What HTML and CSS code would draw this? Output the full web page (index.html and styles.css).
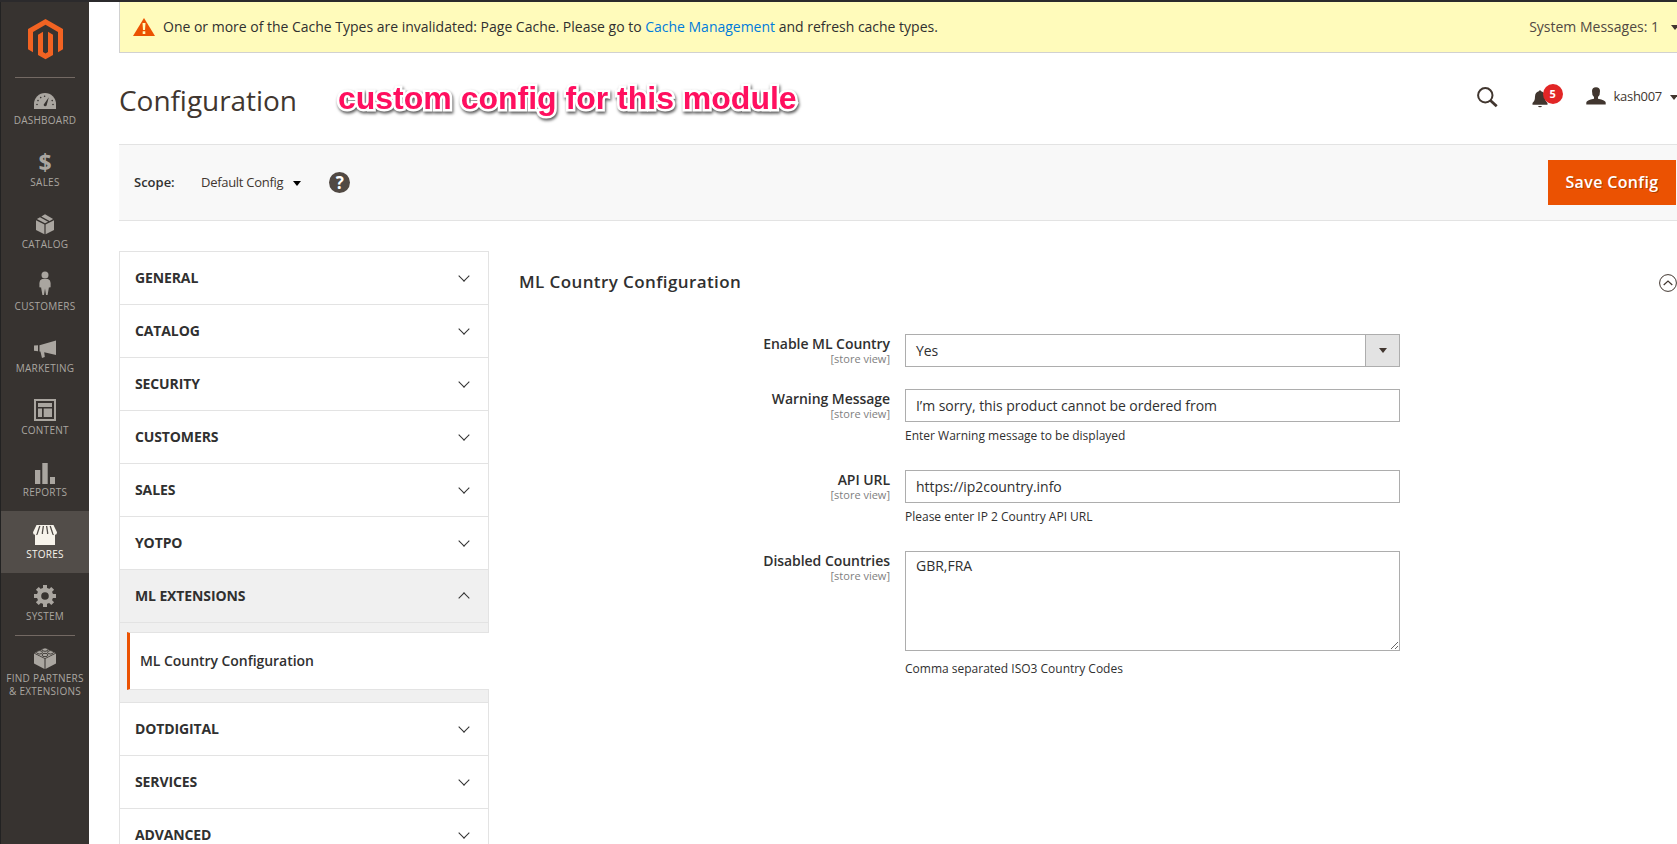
FILE: index.html
```html
<!DOCTYPE html>
<html lang="en">
<head>
<meta charset="utf-8">
<title>Configuration</title>
<link rel="stylesheet" href="styles.css">
</head>
<body>
<div class="page">
  <nav class="menu">
    <div class="logo"><svg width="35" height="41" viewBox="0 0 35 41"><path fill="#f26322" d="M17.5 0 35 10.1V30.3L30 33.2V13L17.5 5.8 5 13V33.2L0 30.3V10.1zM20 12.8 25 15.7V35.9L17.5 40.3 10 35.9V15.7L15 12.8V33L17.5 34.5 20 33z"/></svg></div>
    <a class="item"><span class="icon"><svg width="22" height="16" viewBox="0 0 22 16"><path fill="currentColor" d="M0 16V11A11 11 0 0 1 22 11V16z"/><path fill="#373330" d="M9.6 11.8 14.8 4.2 12.6 12.6A1.7 1.7 0 0 1 9.6 11.8z"/><g fill="#373330"><circle cx="3" cy="11.5" r=".8"/><circle cx="4" cy="7.6" r=".8"/><circle cx="6.7" cy="4.6" r=".8"/><circle cx="10.6" cy="3.2" r=".8"/><circle cx="18.2" cy="7.6" r=".8"/><circle cx="19" cy="11.5" r=".8"/></g></svg></span>Dashboard</a>
    <a class="item"><span class="icon dollar">$</span>Sales</a>
    <a class="item"><span class="icon"><svg width="18" height="21" viewBox="0 0 18 21"><g fill="currentColor"><path d="M0 6.3 8.4 10.4V20.3L0 16zM18 6.3 9.6 10.4V20.3L18 16zM4 3.2 12.1 7.8 9 9.3 .9 5zM5.3 2.4 9 .3 17.1 5 13.6 7z"/></g></svg></span>Catalog</a>
    <a class="item"><span class="icon person"><svg width="12" height="25" viewBox="0 0 12 25"><g fill="currentColor"><circle cx="6" cy="4" r="3.5"/><path d="M3 8H9Q11.6 9 11.6 12V16.2L10 16.6V13 16L8.6 24H7L6 17.5 5 24H3.4L2 16V16.6L.4 16.2V12Q.4 9 3 8z"/></g></svg></span>Customers</a>
    <a class="item"><span class="icon low"><svg width="22" height="19" viewBox="0 0 22 19"><path fill="currentColor" d="M22 .5V15L10.2 12.2 10.8 17 8 18 6.4 11.5H5.5V.5 5.2zM0 5.6 4 5.2V11.3L0 10.8z"/></svg></span>Marketing</a>
    <a class="item"><span class="icon"><svg width="22" height="22" viewBox="0 0 22 22"><g fill="currentColor"><path fill-rule="evenodd" d="M0 0H22V22H0zM2 2V20H20V2z"/><path d="M4 4H18V8H4zM4 9.5H8V18H4zM9.7 9.5H18V18H9.7z"/></g></svg></span>Content</a>
    <a class="item"><span class="icon low"><svg width="20" height="21" viewBox="0 0 20 21"><path fill="currentColor" d="M0 7H5.3V21H0zM7.3 0H12.7V21H7.3zM15 14H20V21H15z"/></svg></span>Reports</a>
    <a class="item current"><span class="icon low"><svg width="24" height="20" viewBox="0 0 24 20"><path fill="currentColor" d="M3.5 0H20.5L24 7.2Q24 9.8 22 9.8V20H2V9.8Q0 9.8 0 7.2z"/><path stroke="#524d49" stroke-width="1.3" fill="none" d="M6.8 1 4.6 7.5Q4.5 9.5 3.3 9.7M10.4 1 9.4 7.5V9M13.6 1 14.6 7.5V9M17.2 1 19.4 7.5Q19.5 9.5 20.7 9.7"/></svg></span>Stores</a>
    <a class="item"><span class="icon"><svg width="22" height="22" viewBox="-11 -11 22 22"><g fill="none" stroke="currentColor"><circle r="6" stroke-width="4.4"/><path stroke-width="4" d="M0-7V-11M0 7V11M-7 0H-11M7 0H11M5-5 7.7-7.7M-5-5-7.7-7.7M5 5 7.7 7.7M-5 5-7.7 7.7"/></g></svg></span>System</a>
    <a class="item partners"><span class="icon"><svg width="22" height="22" viewBox="0 0 22 22"><path fill="currentColor" d="M0 6.5 10.5 11.8V22L0 16.5zM22 6.5 11.5 11.8V22L22 16.5zM11 1 21.3 6 11 11.2 .7 6z"/><g fill="currentColor" stroke="#373330" stroke-width=".9"><ellipse cx="11" cy="2.6" rx="2.9" ry="1.7"/><ellipse cx="5.5" cy="5.3" rx="2.9" ry="1.7"/><ellipse cx="16.5" cy="5.3" rx="2.9" ry="1.7"/><ellipse cx="11" cy="8" rx="2.9" ry="1.7"/></g></svg></span>Find Partners<br>&amp; Extensions</a>
  </nav>
  <main class="main">
    <div class="notice">
      <svg class="warn" width="22" height="18" viewBox="0 0 22 18"><path fill="#eb5202" d="M11 0 22 18H0z"/><path fill="#fffbbb" d="M9.5 5H12.5L12 12H10zM9.7 13.3H12.3V16H9.7z"/></svg>
      <span class="notice-text">One or more of the Cache Types are invalidated: Page Cache. Please go to <a>Cache Management</a> and refresh cache types.</span>
      <span class="sysmsg">System Messages: 1</span><i class="caret"></i>
    </div>
    <header class="header">
      <h1>Configuration</h1>
      <span class="annotation">custom config for this module</span>
      <div class="tools">
        <svg class="search" width="21" height="21" viewBox="0 0 21 21"><g fill="none" stroke="#41362f"><circle cx="8.3" cy="8.3" r="7.2" stroke-width="2"/><path stroke-width="2.8" d="M13.2 13.2 19.7 19.2"/></g></svg>
        <span class="bell"><svg width="16" height="18" viewBox="0 0 16 18"><path fill="#41362f" d="M6.8 1.2Q8-.8 9.2 1.2Q12.8 2 13 6.5Q13 11 15.5 13V14.7H.5V13Q3 11 3 6.5Q3.2 2 6.8 1.2zM6 16H10Q9.5 17.3 8 17.3Q6.5 17.3 6 16z"/></svg><b class="badge">5</b></span>
        <svg class="user" width="20" height="18" viewBox="0 0 20 18"><path fill="#41362f" d="M6 4Q6 .2 10 .2T14 4Q14.2 8 12 10V11.8Q19.7 13.5 19.7 15.5V17.5H.3V15.5Q.3 13.5 8 11.8V10Q5.8 8 6 4z"/></svg>
        <span class="username">kash007</span><i class="caret"></i>
      </div>
    </header>
    <div class="scopebar">
      <span class="scope">Scope:</span><span class="store">Default Config</span><i class="caret black"></i>
      <span class="help">?</span>
      <button class="save">Save Config</button>
    </div>
    <div class="columns">
      <aside class="tabs">
        <div class="tab">General<i class="chev"></i></div>
        <div class="tab">Catalog<i class="chev"></i></div>
        <div class="tab">Security<i class="chev"></i></div>
        <div class="tab">Customers<i class="chev"></i></div>
        <div class="tab">Sales<i class="chev"></i></div>
        <div class="tab">Yotpo<i class="chev"></i></div>
        <div class="tab open">ML Extensions<i class="chev up"></i></div>
        <div class="sub"><div class="subitem">ML Country Configuration</div></div>
        <div class="tab">Dotdigital<i class="chev"></i></div>
        <div class="tab">Services<i class="chev"></i></div>
        <div class="tab">Advanced<i class="chev"></i></div>
      </aside>
      <section class="config">
        <div class="section-head"><h2>ML Country Configuration</h2><svg width="18" height="18" viewBox="0 0 18 18"><g fill="none" stroke="#41362f"><circle cx="9" cy="9" r="8.4"/><path stroke-width="1.2" d="M4.7 11 9 7 13.3 11"/></g></svg></div>
        <div class="field"><label>Enable ML Country<small>[store view]</small></label><div class="control"><div class="box select">Yes<span class="arrow"><i class="caret"></i></span></div></div></div>
        <div class="field tall"><label>Warning Message<small>[store view]</small></label><div class="control"><div class="box">I’m sorry, this product cannot be ordered from</div><p>Enter Warning message to be displayed</p></div></div>
        <div class="field tall"><label>API URL<small>[store view]</small></label><div class="control"><div class="box">https://ip2country.info</div><p>Please enter IP 2 Country API URL</p></div></div>
        <div class="field"><label>Disabled Countries<small>[store view]</small></label><div class="control"><textarea class="area">GBR,FRA</textarea><p>Comma separated ISO3 Country Codes</p></div></div>
      </section>
    </div>
  </main>
</div>
</body>
</html>
```
FILE: styles.css
```css
* { box-sizing: border-box; }
body { margin: 0; background: #fff; color: #303030; font-family: "Open Sans", "Noto Sans", sans-serif; font-size: 14px; overflow: hidden; }
.page { display: flex; height: 844px; width: 1677px; border-top: 2px solid #2b2a2c; overflow: hidden; }
.menu { width: 89px; flex: none; background: #373330; border-left: 1px solid #222; color: #aaa6a0; }
.logo { height: 75px; padding: 17px 0 0 27px; }
.logo svg { display: block; }
.item { display: block; position: relative; height: 62px; text-align: center; text-transform: uppercase; font-size: 10px; line-height: 13px; letter-spacing: .25px; white-space: nowrap; }
.item:nth-of-type(1)::before, .partners::before { content: ""; position: absolute; left: 14px; top: 0; width: 60px; height: 1px; background: #736963; }
.icon { display: flex; height: 37px; padding-top: 9px; align-items: center; justify-content: center; }
.item:nth-of-type(1) .icon, .low { padding-top: 11px; }
.item svg { display: block; }
.item .dollar { font: bold 23px/28px "Open Sans", sans-serif; letter-spacing: 0; padding-top: 8px; }
.item .person { padding-top: 3px; }
.current { background: #524d49; color: #f7f3eb; }
.main { flex: 1; padding-left: 30px; min-width: 0; }
.notice { height: 51px; display: flex; align-items: center; background: #fffbbb; border-left: 1px solid #d1d1d1; border-bottom: 1px solid #d1d1d1; padding-left: 13px; }
.warn { margin-right: 8px; }
.notice-text a { color: #007bdb; }
.notice-text { padding-bottom: 1px; letter-spacing: -.01px; }
.sysmsg { margin-left: auto; color: #514943; padding-bottom: 1px; }
.caret { flex: none; width: 0; height: 0; border: 4px solid transparent; border-top: 5px solid #41362f; border-bottom: 0; }
.notice .caret { margin: 0 -2px 0 12px; }
.header { height: 91px; display: flex; align-items: center; }
h1 { font-weight: 400; font-size: 28px; line-height: 36px; margin: 3px 0 0; color: #41362f; letter-spacing: -.05px; }
.annotation { font: bold 32px/36px "Liberation Sans", Arial, sans-serif; color: #ff0f5f; margin: 0 0 1px 41px; white-space: nowrap; -webkit-text-stroke: 5px #fff; paint-order: stroke fill; filter: drop-shadow(1px 2px 1.5px rgba(0,0,0,.65)); }
.tools { display: flex; align-items: center; margin: -3px -1px 0 auto; }
.bell { position: relative; display: flex; margin-left: 34px; margin-top: 3px; }
.badge { position: absolute; left: 11px; top: -6px; width: 20px; height: 20px; border-radius: 50%; background: #e22626; color: #fff; font-size: 11px; line-height: 20px; text-align: center; }
.user { margin: -2px 0 0 38px; }
.username { font-size: 13px; color: #41362f; margin-left: 8px; padding-bottom: 3px; letter-spacing: -.3px; }
.tools .caret { margin: 0 0 0 8px; }
.scopebar { height: 77px; display: flex; align-items: center; background: #f8f8f8; border: 1px solid #e3e3e3; border-width: 1px 0; padding: 0 1px 0 15px; font-size: 13px; }
.scope { font-weight: 600; width: 67px; padding-bottom: 1px; }
.store { color: #41362f; margin-right: 10px; letter-spacing: -.29px; padding-bottom: 1px; }
.caret.black { border-top-color: #000; margin-top: 2px; }
.help { width: 21px; height: 21px; border-radius: 50%; background: #514943; color: #fff; font-weight: 700; font-size: 17px; line-height: 21px; text-align: center; margin-left: 28px; }
.save { margin-left: auto; width: 128px; height: 45px; border: 0; background: #eb5202; color: #fff; font: 600 16px "Open Sans", sans-serif; letter-spacing: .35px; text-shadow: 1px 1px 0 rgba(0,0,0,.25); padding: 0 0 2px; }
.columns { display: flex; padding-top: 30px; }
.tabs { width: 370px; flex: none; border: 1px solid #e3e3e3; border-bottom: 0; }
.tab { height: 53px; border-bottom: 1px solid #e3e3e3; padding: 0 20px 2px 15px; display: flex; align-items: center; justify-content: space-between; font-weight: 700; letter-spacing: -.12px; text-transform: uppercase; }
.chev { width: 8px; height: 8px; border: solid #303030; border-width: 0 1.4px 1.4px 0; transform: translateY(-1px) rotate(45deg); }
.chev.up { transform: translateY(3px) rotate(225deg); }
.open { background: #f0f0f0; }
.sub { background: #f0f0f0; padding: 9px 0 12px 7px; height: 80px; border-bottom: 1px solid #e3e3e3; }
.subitem { height: 58px; margin-right: -1px; border: 1px solid #e3e3e3; border-left: 3px solid #eb5202; border-right: 0; background: #fff; padding-left: 10px; line-height: 56px; font-weight: 600; letter-spacing: -.05px; position: relative; }
.config { flex: 1; padding-left: 31px; }
.section-head { display: flex; justify-content: space-between; align-items: center; height: 83px; padding-bottom: 20px; }
h2 { font-size: 17px; font-weight: 600; letter-spacing: .4px; margin: -2px 0 0 -1px; }
.field { display: grid; grid-template-columns: 370px 495px; column-gap: 15px; height: 55px; }
.tall { height: 81px; }
label { text-align: right; font-weight: 600; line-height: 18px; padding-top: 1px; letter-spacing: -.05px; }
small { display: block; font-size: 11px; line-height: 13px; margin-top: -1px; font-weight: 400; letter-spacing: 0; color: #808080; }
.box { height: 33px; border: 1px solid #adadad; padding: 0 10px; line-height: 32px; font-size: 14px; letter-spacing: -.05px; display: flex; justify-content: space-between; }
.select { padding-right: 0; }
.arrow { width: 34px; background: #e3e3e3; border-left: 1px solid #adadad; display: flex; align-items: center; justify-content: center; }
p { margin: 6px 0 0; font-size: 12px; line-height: 16px; }
.area { display: block; width: 495px; height: 100px; border: 1px solid #adadad; padding: 4px 10px; font: 14px/19px "Open Sans", sans-serif; color: #303030; resize: both; border-radius: 0; }
.area + p { margin-top: 10px; }
```
